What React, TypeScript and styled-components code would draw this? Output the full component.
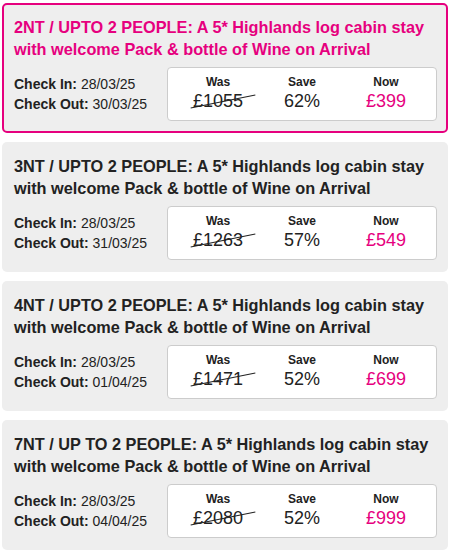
import React, { FC } from 'react';
import styled, { createGlobalStyle, css } from 'styled-components';

const GlobalStyle = createGlobalStyle`
  * {
    box-sizing: border-box;
  }

  body {
    margin: 0;
    background: #ffffff;
    font-family: 'Liberation Sans', Arial, Helvetica, sans-serif;
    color: #222222;
  }
`;

const PINK = '#e6007e';

interface Offer {
  title: string;
  checkIn: string;
  checkOut: string;
  was: string;
  save: string;
  now: string;
}

const offers: Offer[] = [
  {
    title:
      '2NT / UPTO 2 PEOPLE: A 5* Highlands log cabin stay with welcome Pack & bottle of Wine on Arrival',
    checkIn: '28/03/25',
    checkOut: '30/03/25',
    was: '£1055',
    save: '62%',
    now: '£399',
  },
  {
    title:
      '3NT / UPTO 2 PEOPLE: A 5* Highlands log cabin stay with welcome Pack & bottle of Wine on Arrival',
    checkIn: '28/03/25',
    checkOut: '31/03/25',
    was: '£1263',
    save: '57%',
    now: '£549',
  },
  {
    title:
      '4NT / UPTO 2 PEOPLE: A 5* Highlands log cabin stay with welcome Pack & bottle of Wine on Arrival',
    checkIn: '28/03/25',
    checkOut: '01/04/25',
    was: '£1471',
    save: '52%',
    now: '£699',
  },
  {
    title:
      '7NT / UP TO 2 PEOPLE: A 5* Highlands log cabin stay with welcome Pack & bottle of Wine on Arrival',
    checkIn: '28/03/25',
    checkOut: '04/04/25',
    was: '£2080',
    save: '52%',
    now: '£999',
  },
];

const OfferList = styled.div`
  display: flex;
  flex-direction: column;
  gap: 9px;
  padding: 3px 5px 3px 2px;
`;

const Card = styled.div<{ $selected?: boolean }>`
  background: #eeeeee;
  border: 2px solid transparent;
  border-radius: 5px;
  padding: 11px 9px 10px 10px;

  ${(props) =>
    props.$selected &&
    css`
      border-color: ${PINK};
    `}
`;

const Title = styled.h3<{ $selected?: boolean }>`
  margin: 0 0 7px;
  font-size: 16.3px;
  line-height: 22px;
  font-weight: bold;
  color: ${(props) => (props.$selected ? PINK : '#222222')};
`;

const DetailsRow = styled.div`
  display: flex;
  align-items: center;
  justify-content: space-between;
`;

const Dates = styled.div`
  font-size: 14px;
  line-height: 20px;
`;

const DateLabel = styled.strong`
  font-weight: bold;
`;

const PriceBox = styled.div`
  width: 270px;
  display: grid;
  grid-template-columns: repeat(3, 1fr);
  padding: 6px 8px 8px;
  background: #ffffff;
  border: 1px solid #cccccc;
  border-radius: 4px;
  text-align: center;
`;

const PriceColumn = styled.div`
  display: flex;
  flex-direction: column;
  align-items: center;
`;

const PriceLabel = styled.span`
  font-size: 12px;
  line-height: 16px;
  font-weight: bold;
`;

const PriceValue = styled.span<{ $highlight?: boolean }>`
  font-size: 18px;
  line-height: 22px;
  color: ${(props) => (props.$highlight ? PINK : '#222222')};
`;

const StruckPrice = styled(PriceValue)`
  position: relative;
  display: inline-block;

  &::after {
    content: '';
    position: absolute;
    left: -3px;
    width: 66px;
    top: 50%;
    height: 1px;
    background: #222222;
    transform: rotate(-11.5deg);
  }
`;

const OfferCard: FC<{ offer: Offer; selected?: boolean }> = ({
  offer,
  selected,
}) => (
  <Card $selected={selected}>
    <Title $selected={selected}>{offer.title}</Title>
    <DetailsRow>
      <Dates>
        <div>
          <DateLabel>Check In:</DateLabel> {offer.checkIn}
        </div>
        <div>
          <DateLabel>Check Out:</DateLabel> {offer.checkOut}
        </div>
      </Dates>
      <PriceBox>
        <PriceColumn>
          <PriceLabel>Was</PriceLabel>
          <StruckPrice>{offer.was}</StruckPrice>
        </PriceColumn>
        <PriceColumn>
          <PriceLabel>Save</PriceLabel>
          <PriceValue>{offer.save}</PriceValue>
        </PriceColumn>
        <PriceColumn>
          <PriceLabel>Now</PriceLabel>
          <PriceValue $highlight>{offer.now}</PriceValue>
        </PriceColumn>
      </PriceBox>
    </DetailsRow>
  </Card>
);

const App: FC = () => (
  <>
    <GlobalStyle />
    <OfferList>
      {offers.map((offer, i) => (
        <OfferCard key={offer.title} offer={offer} selected={i === 0} />
      ))}
    </OfferList>
  </>
);

export default App;
